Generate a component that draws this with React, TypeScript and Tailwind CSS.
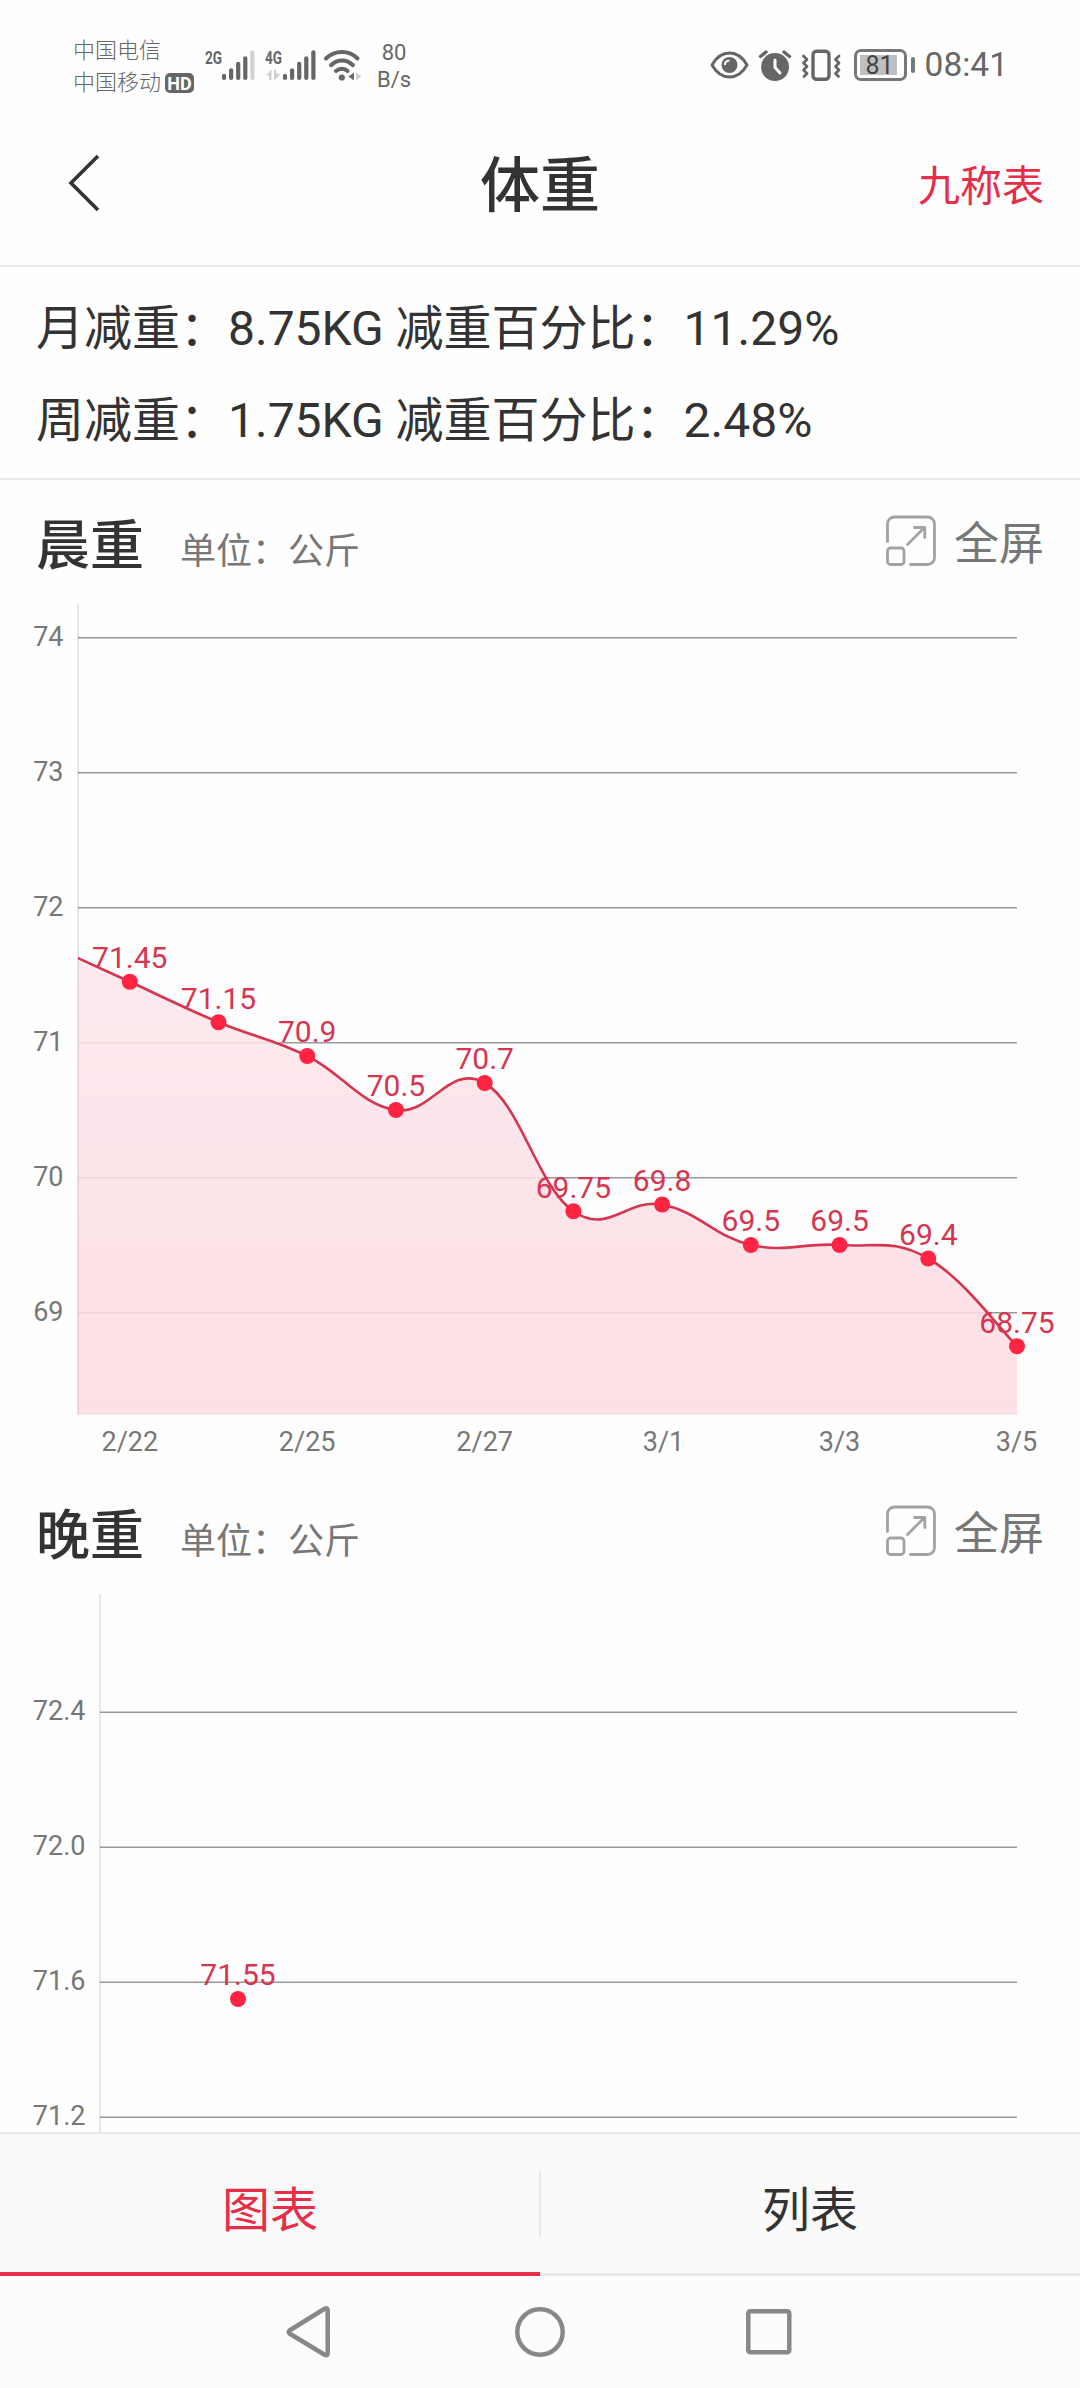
import { useState } from "react";

const GRID = "#999999";
const LABEL = "#777777";
const RED = "#d63550";
const DOT = "#ff2442";

type Point = { x: number; y: number; label?: string };
type Tick = { y: number; label: string };

const morningTicks: Tick[] = [
  { y: 33.75, label: "74" },
  { y: 168.75, label: "73" },
  { y: 303.75, label: "72" },
  { y: 438.75, label: "71" },
  { y: 573.75, label: "70" },
  { y: 708.75, label: "69" },
];

const morningWeights = [71.75, 71.45, 71.15, 70.9, 70.5, 70.7, 69.75, 69.8, 69.5, 69.5, 69.4, 68.75];

const morningPoints: Point[] = morningWeights.map((w, i) => ({
  x: 129.8 + (i - 1) * 88.72,
  y: 33.5 + (74 - w) * 135,
  label: i === 0 ? undefined : String(w),
}));

const morningDates = [
  { x: 129.8, label: "2/22" },
  { x: 307.2, label: "2/25" },
  { x: 484.7, label: "2/27" },
  { x: 663.5, label: "3/1" },
  { x: 839.5, label: "3/3" },
  { x: 1016.5, label: "3/5" },
];

const eveningTicks: Tick[] = [
  { y: 118.25, label: "72.4" },
  { y: 253.25, label: "72.0" },
  { y: 388.25, label: "71.6" },
  { y: 523.25, label: "71.2" },
];

const eveningPoints: Point[] = [{ x: 238, y: 405, label: "71.55" }];

// Cubic smoothing, each handle is 20% of the distance between the neighbours
function smoothPath(points: Point[]) {
  const at = (i: number) => points[Math.max(0, Math.min(points.length - 1, i))];
  let d = `M${at(0).x} ${at(0).y}`;
  for (let i = 1; i < points.length; i++) {
    const c1x = at(i - 1).x + (at(i).x - at(i - 2).x) * 0.2;
    const c1y = at(i - 1).y + (at(i).y - at(i - 2).y) * 0.2;
    const c2x = at(i).x - (at(i + 1).x - at(i - 1).x) * 0.2;
    const c2y = at(i).y - (at(i + 1).y - at(i - 1).y) * 0.2;
    d += ` C${c1x} ${c1y} ${c2x} ${c2y} ${at(i).x} ${at(i).y}`;
  }
  return d;
}

interface ChartProps {
  id: string;
  height: number;
  left: number;
  ticks: Tick[];
  points: Point[];
  dates?: { x: number; label: string }[];
}

function WeightChart({ id, height, left, ticks, points, dates = [] }: ChartProps) {
  const right = 1017;
  const bottom = 810.5;
  const line = smoothPath(points);

  return (
    <svg width="1080" height={height} viewBox={`0 0 1080 ${height}`} className="block" fontFamily="Roboto, sans-serif">
      <defs>
        <clipPath id={`${id}-clip`}>
          <rect x={left} y="0" width={right - left} height={bottom} />
        </clipPath>
        <linearGradient id={`${id}-fill`} gradientUnits="userSpaceOnUse" x1="0" y1="300" x2="0" y2={bottom}>
          <stop offset="0" stopColor="#fce7ec" />
          <stop offset="1" stopColor="#fddbe2" />
        </linearGradient>
      </defs>

      {ticks.map((t) => (
        <g key={t.label}>
          <line x1={left} x2={right} y1={t.y} y2={t.y} stroke={GRID} strokeWidth="1.5" />
          <text x={left - 14.5} y={t.y + 8} textAnchor="end" fontSize="27" fill={LABEL}>{t.label}</text>
        </g>
      ))}

      {points.length > 1 && (
        <path
          d={`${line} L${right} ${bottom} L${points[0].x} ${bottom} Z`}
          fill={`url(#${id}-fill)`}
          fillOpacity="0.86"
          clipPath={`url(#${id}-clip)`}
        />
      )}
      <line x1={left} x2={left} y1="0" y2={bottom} stroke="#000" strokeOpacity="0.09" strokeWidth="2" />
      <line x1={left} x2={right} y1={bottom - 0.5} y2={bottom - 0.5} stroke="#000" strokeOpacity="0.04" strokeWidth="2" />
      {points.length > 1 && (
        <path d={line} fill="none" stroke={RED} strokeWidth="2.6" clipPath={`url(#${id}-clip)`} />
      )}

      {points.filter((p) => p.label).map((p) => (
        <g key={p.x}>
          <text x={p.x} y={p.y - 13.75} textAnchor="middle" fontSize="30" fill={RED}>{p.label}</text>
          <circle cx={p.x} cy={p.y} r="8" fill={DOT} />
        </g>
      ))}

      {dates.map((d) => (
        <text key={d.label} x={d.x} y="846.5" textAnchor="middle" fontSize="27" fill={LABEL}>{d.label}</text>
      ))}
    </svg>
  );
}

function SectionHeader({ title }: { title: string }) {
  return (
    <div className="h-[124px] shrink-0 px-9 pt-[35px] flex items-start justify-between">
      <div className="flex items-start">
        <h2 className="text-[54px] leading-[64px] font-medium text-[#333333]">{title}</h2>
        <span className="ml-9 text-[36px] leading-[74px] text-[#777777]">单位：公斤</span>
      </div>
      <button className="h-[54px] -mt-px flex items-center gap-[17px]">
        <svg width="52" height="52" viewBox="0 0 52 52" fill="none" stroke="#a3a3a3" strokeWidth="2.8" strokeLinecap="round" strokeLinejoin="round">
          <path d="M2.5 26.5V9a7 7 0 0 1 7-7H42.5a7 7 0 0 1 7 7V42.5a7 7 0 0 1-7 7H25.5" />
          <rect x="2.5" y="33" width="16.5" height="16.5" rx="3" />
          <path d="M22.5 29.5L39.5 12.5M29.5 12.5H39.8V22.5" />
        </svg>
        <span className="mt-[8px] text-[45px] leading-[54px] text-[#777777]">全屏</span>
      </button>
    </div>
  );
}

function Signal({ weak = false }: { weak?: boolean }) {
  const tops = [25.5, 20, 13.5, 8, 2];
  return (
    <svg width="34" height="34" viewBox="0 0 34 34" strokeWidth="4.2" strokeLinecap="round">
      {tops.map((top, i) => (
        <line
          key={top}
          x1={3 + i * 7.1}
          x2={3 + i * 7.1}
          y1={top + 2.3}
          y2="30"
          stroke={weak && i === 4 ? "#d2d2d2" : "#666666"}
        />
      ))}
    </svg>
  );
}

function StatusBar() {
  return (
    <div className="h-[108px] shrink-0 px-[73px] flex items-start justify-between text-[#666666]">
      <div className="flex items-start">
        <div className="w-[132px] pt-[35px] text-[22px] leading-8 font-light">
          <div>中国电信</div>
          <div className="flex items-center">
            <span>中国移动</span>
            <span className="ml-1 w-[29px] h-5 rounded-[5px] bg-[#666666] text-white text-[18px] leading-[21px] font-bold flex justify-center">HD</span>
          </div>
        </div>

        <div className="flex pt-12">
          <svg className="overflow-visible" width="17" height="34" viewBox="0 0 17 34">
            <text x="0" y="15.5" fontSize="19" fontWeight="700" fontFamily="Roboto" textLength="17" lengthAdjust="spacingAndGlyphs" fill="#666">2G</text>
          </svg>
          <div className="-ml-px"><Signal weak /></div>
          <svg className="ml-[10px] overflow-visible" width="17" height="34" viewBox="0 0 17 34">
            <text x="0" y="15.5" fontSize="19" fontWeight="700" fontFamily="Roboto" textLength="17" lengthAdjust="spacingAndGlyphs" fill="#666">4G</text>
            <path d="M1 27.5L6.5 21.5V32H4V27.5ZM9 21.5H11V25L15.500 26.5L9.500 32H9Z" fill="#cfcfcf" />
          </svg>
          <Signal />
          <svg className="ml-[7px]" width="40" height="34" viewBox="0 0 40 34" fill="none" stroke="#666666" strokeWidth="4" strokeLinecap="round">
            <path d="M3 10.5C12 1.8 26 1.8 34.5 10.5" />
            <path d="M8 17.2C14.5 10.8 23.500 10.800 30 17.2" />
            <path d="M13 23C16.5 20 21.5 20 24.500 23" />
            <circle cx="18.8" cy="29.5" r="3.1" fill="#666666" stroke="none" />
            <path d="M31 24.500V32.500L25.500 28.500Z" fill="#666666" stroke="none" />
            <path d="M33 24.500V32.500L38.500 28.500Z" fill="#cfcfcf" stroke="none" />
          </svg>
        </div>

        <div className="ml-[11px] pt-10 w-10 text-center text-[22px] leading-[26.5px]">
          <div>80</div>
          <div>B/s</div>
        </div>
      </div>

      <div className="flex items-center pt-[46px]">
        <svg width="40" height="34" viewBox="0 0 40 34" fill="none" stroke="#666666">
          <path d="M3 17C7.5 9 13.5 5 20.5 5S33.5 9 38 17C33.5 25 27.5 29 20.5 29S7.5 25 3 17Z" strokeWidth="3" strokeLinejoin="round" />
          <circle cx="20.5" cy="17" r="8" fill="#666666" stroke="none" />
          <path d="M15.8 17a4.6 4.6 0 0 1 4.6-4.6" stroke="#fff" strokeWidth="2" />
        </svg>
        <svg className="ml-[9px]" width="34" height="34" viewBox="0 0 34 34" fill="none" stroke="#666666" strokeLinecap="round">
          <circle cx="17" cy="19" r="14" fill="#666666" stroke="none" />
          <path d="M2.5 8.5L8 4M31.5 8.5L26 4" strokeWidth="3.4" />
          <path d="M17 12V19.5L22 25" stroke="#fff" strokeWidth="3" />
        </svg>
        <svg className="ml-[8px]" width="42" height="34" viewBox="0 0 42 34" fill="none" stroke="#666666" strokeLinecap="round" strokeLinejoin="round">
          <rect x="13" y="3.3" width="16" height="28" rx="3.5" strokeWidth="3.4" />
          <path d="M3.5 8L7 11.5L3.5 15L7 18.5L3.5 22L7 25.5L4 28.5" strokeWidth="2.8" />
          <path d="M39 8L35.5 11.5L39 15L35.5 18.5L39 22L35.5 25.5L38.5 28.5" strokeWidth="2.8" />
        </svg>
        <div className="ml-[12px] w-[53px] h-[32px] rounded-[7px] border-[3px] border-[#777777] flex items-center p-[3px]">
          <div className="w-[37px] h-5 bg-[#bfbfbf] text-[#444444] text-[25px] leading-[21px] flex justify-end pr-[3px]">81</div>
        </div>
        <div className="ml-1 w-1 h-4 rounded-full bg-[#777777]" />
        <div className="ml-[10px] -mr-px text-[33.5px] leading-[36px] pt-px">08:41</div>
      </div>
    </div>
  );
}

export default function App() {
  const [tab, setTab] = useState<"chart" | "list">("chart");

  return (
    <div className="w-[1080px] h-[2388px] bg-[#fefefe] flex flex-col overflow-hidden font-[Roboto,'Noto_Sans_CJK_SC',sans-serif]">
      <StatusBar />

      {/* Title bar */}
      <header className="h-[159px] shrink-0 px-9 grid grid-cols-3 items-center border-b-2 border-[#e8e8e8]">
        <button className="pl-[30px] -mt-[7px]">
          <svg width="36" height="58" viewBox="0 0 36 58" fill="none" stroke="#333333" strokeWidth="3.6">
            <path d="M32 2L5 29L32 56" />
          </svg>
        </button>
        <h1 className="text-center text-[60px] leading-[72px] font-medium text-[#333333]">体重</h1>
        <button className="text-right text-[42px] leading-[60px] text-[#e62e49]">九称表</button>
      </header>

      {/* Loss summary */}
      <div className="h-[213px] shrink-0 px-9 pt-4 border-b-2 border-[#e8e8e8] text-[48px] leading-[92px] text-[#333333]">
        <p>月减重：8.75KG 减重百分比：11.29%</p>
        <p>周减重：1.75KG 减重百分比：2.48%</p>
      </div>

      {/* Charts */}
      <main className="h-[1652px] shrink-0 overflow-hidden">
        <SectionHeader title="晨重" />
        <WeightChart id="morning" height={866} left={78} ticks={morningTicks} points={morningPoints} dates={morningDates} />
        <SectionHeader title="晚重" />
        <WeightChart id="evening" height={538} left={100} ticks={eveningTicks} points={eveningPoints} />
      </main>

      {/* Tabs */}
      <nav className="h-[144px] shrink-0 flex items-stretch border-t-2 border-[#e8e8e8] bg-[#fafafa] text-[48px]">
        <button
          onClick={() => setTab("chart")}
          className={`flex-1 pt-[15px] ${tab === "chart" ? "text-[#e62e49] border-b-4 border-[#e62e49]" : "text-[#333333] border-b-3 border-[#e8e8e8]"}`}
        >
          图表
        </button>
        <div className="w-0.5 -mx-px h-[66px] mt-[37px] bg-[#e8e8e8]" />
        <button
          onClick={() => setTab("list")}
          className={`flex-1 pt-[15px] ${tab === "list" ? "text-[#e62e49] border-b-4 border-[#e62e49]" : "text-[#333333] border-b-3 border-[#e8e8e8]"}`}
        >
          列表
        </button>
      </nav>

      {/* System navigation */}
      <div className="flex-1 bg-[#fcfcfc] flex items-center justify-center">
        <svg width="540" height="112" viewBox="270 0 540 112" fill="none" stroke="#888888" strokeWidth="4.5" strokeLinejoin="round">
          <path d="M289.5 54.5L325 32.5Q327.7 31.5 327.7 34V77.5Q327.7 80 325 79L289.5 57.5Q288 56 289.5 54.5Z" />
          <circle cx="540" cy="56" r="22.7" />
          <rect x="748.3" y="35.2" width="41" height="41" rx="2" />
        </svg>
      </div>
    </div>
  );
}
